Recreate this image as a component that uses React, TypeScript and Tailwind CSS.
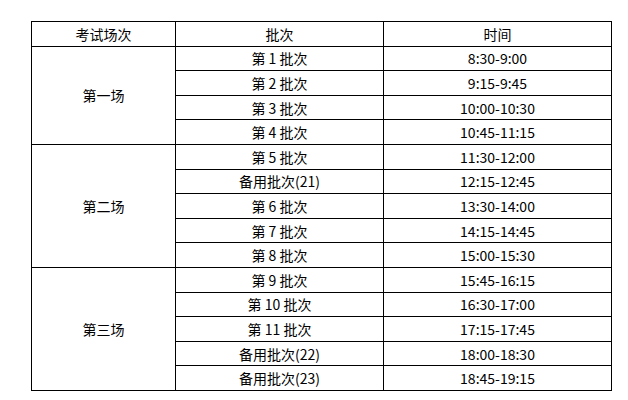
const sessions = [
  {
    name: "第一场",
    rows: [
      ["第 1 批次", "8:30-9:00"],
      ["第 2 批次", "9:15-9:45"],
      ["第 3 批次", "10:00-10:30"],
      ["第 4 批次", "10:45-11:15"],
    ],
  },
  {
    name: "第二场",
    rows: [
      ["第 5 批次", "11:30-12:00"],
      ["备用批次(21)", "12:15-12:45"],
      ["第 6 批次", "13:30-14:00"],
      ["第 7 批次", "14:15-14:45"],
      ["第 8 批次", "15:00-15:30"],
    ],
  },
  {
    name: "第三场",
    rows: [
      ["第 9 批次", "15:45-16:15"],
      ["第 10 批次", "16:30-17:00"],
      ["第 11 批次", "17:15-17:45"],
      ["备用批次(22)", "18:00-18:30"],
      ["备用批次(23)", "18:45-19:15"],
    ],
  },
];

const cell = "border border-black text-center align-middle p-0 leading-none";

const App = () => {
  return (
    <main className="w-[628px] h-[400px] bg-white pt-[21px] pl-[31px] text-black text-[14px] font-['Noto_Sans_CJK_SC',sans-serif]">
      <table className="border-collapse table-fixed w-[580px]">
        <colgroup>
          <col className="w-[144px]" />
          <col className="w-[208px]" />
          <col className="w-[228px]" />
        </colgroup>
        <thead>
          <tr className="h-[24.6px]">
            <th className={`${cell} font-normal`}>考试场次</th>
            <th className={`${cell} font-normal`}>批次</th>
            <th className={`${cell} font-normal`}>时间</th>
          </tr>
        </thead>
        <tbody>
          {sessions.map((s) =>
            s.rows.map(([batch, time], i) => (
              <tr key={batch} className="h-[24.6px]">
                {i === 0 && (
                  <td rowSpan={s.rows.length} className={cell}>
                    {s.name}
                  </td>
                )}
                <td className={cell}>{batch}</td>
                <td className={cell}>{time}</td>
              </tr>
            ))
          )}
        </tbody>
      </table>
    </main>
  );
};

export default App;
